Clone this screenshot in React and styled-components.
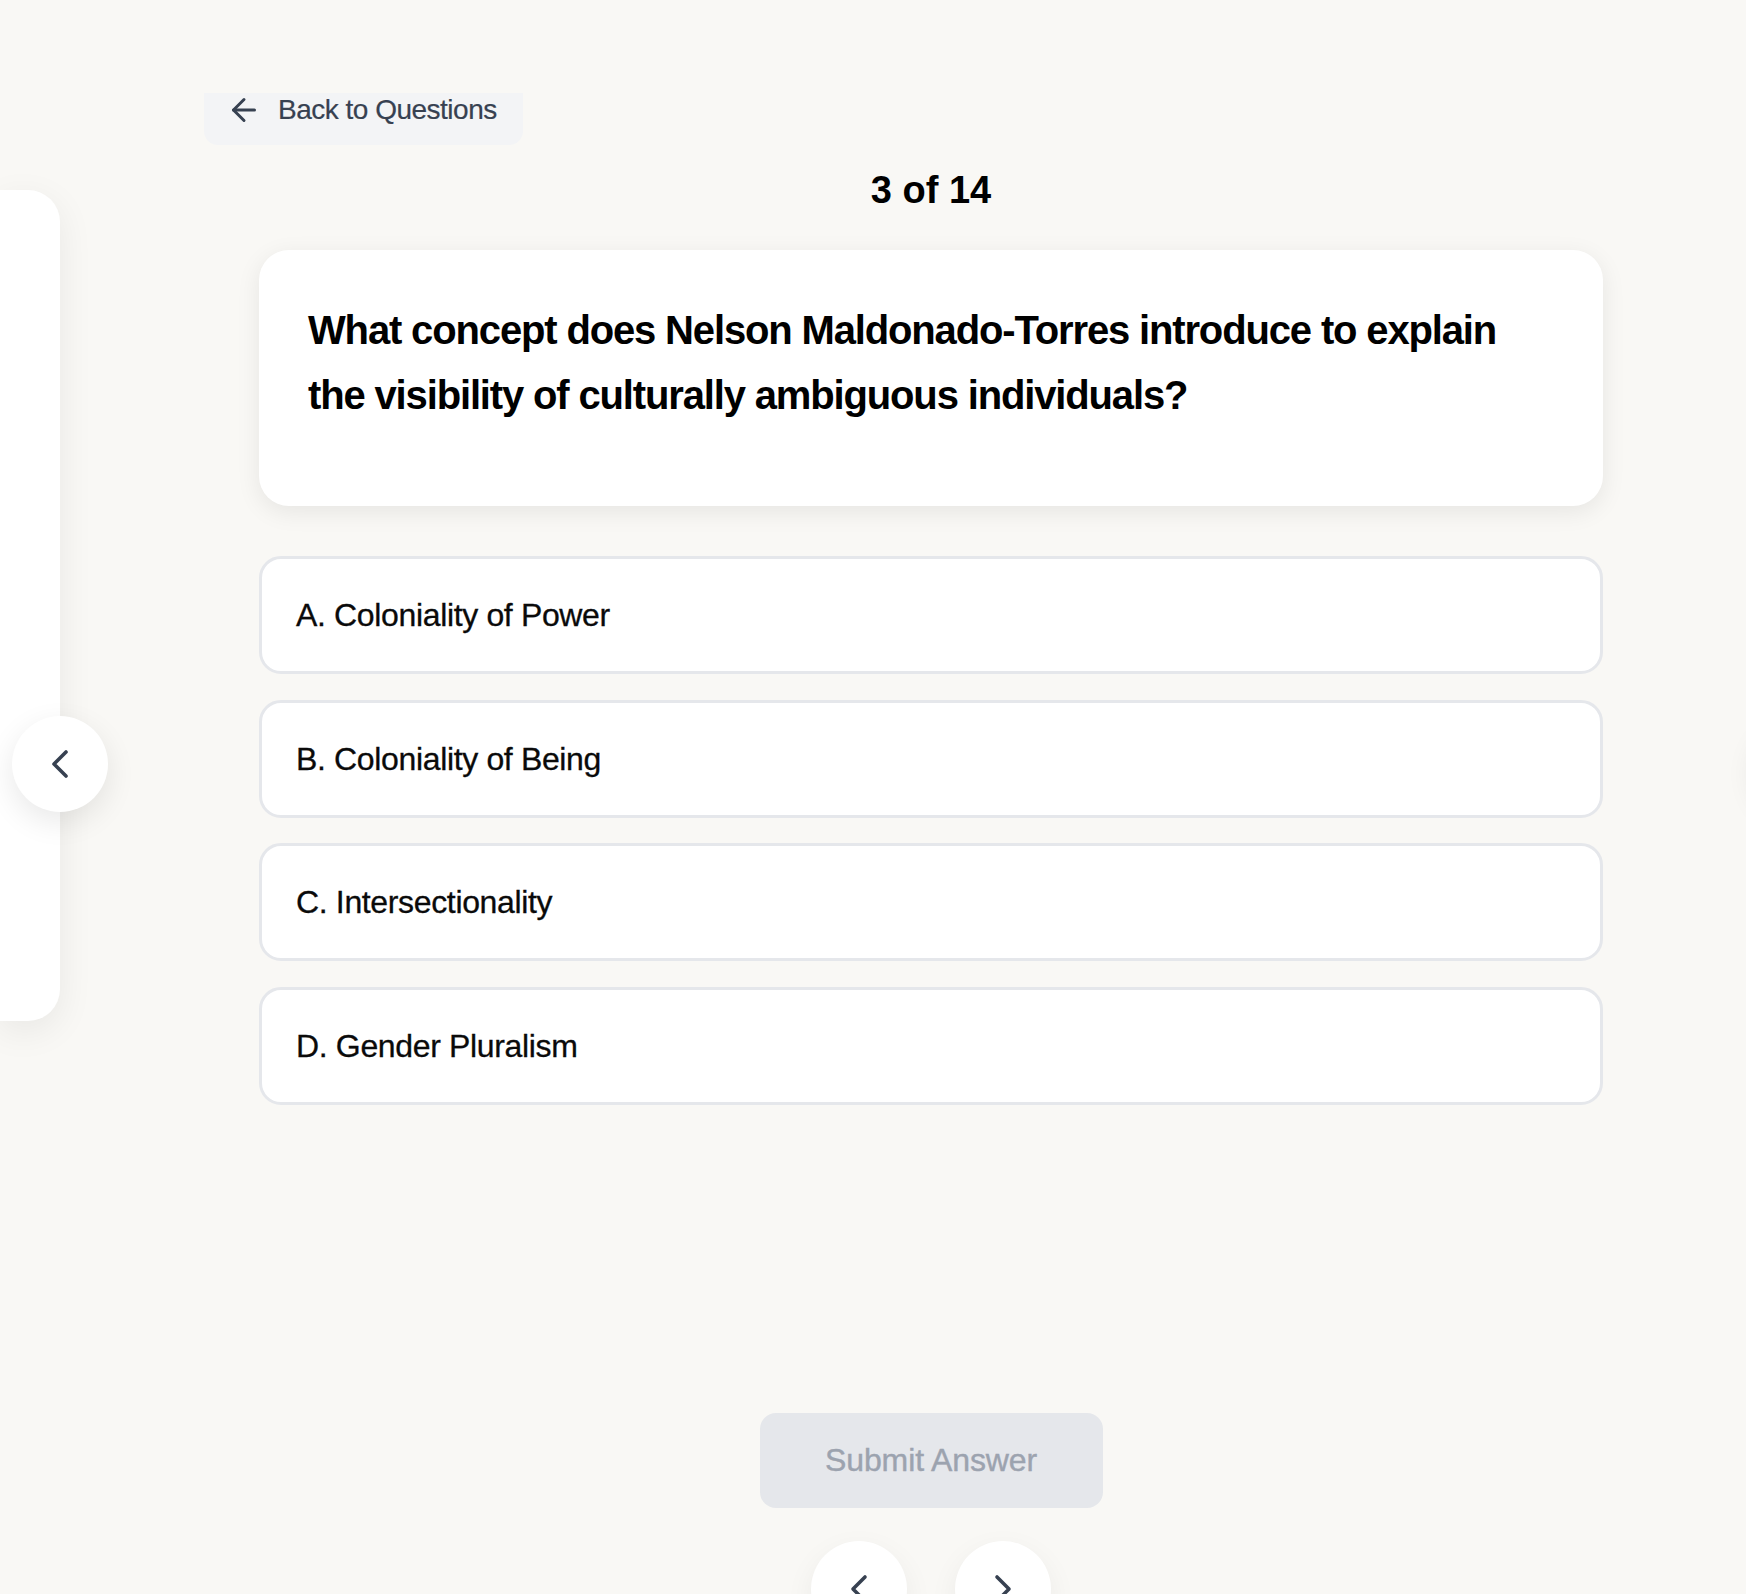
import styled, { createGlobalStyle } from 'styled-components';
import { ArrowLeft, ChevronLeft, ChevronRight } from 'lucide-react';

const GlobalStyle = createGlobalStyle`
  html, body {
    margin: 0;
    padding: 0;
    background: #f9f8f5;
    font-family: "Liberation Sans", Arial, sans-serif;
  }
  * { box-sizing: border-box; }
`;

const Page = styled.div`
  width: 100%;
  min-height: 1594px;
  overflow: hidden;
  background: #f9f8f5;
`;

// 위쪽이 잘려 보이는 뒤로가기 버튼
const BackWrap = styled.div`
  margin-top: 93px;
  height: 52px;
  padding-left: 204px;
  overflow: hidden;
`;

const BackButton = styled.button`
  margin-top: -18px;
  height: 70px;
  display: flex;
  align-items: center;
  gap: 16px;
  padding: 0 26px 0 22px;
  border: none;
  border-radius: 14px;
  background: #f3f4f6;
  color: #374151;
  font-family: "Liberation Sans", Arial, sans-serif;
  font-size: 28px;
  letter-spacing: -0.5px;
  -webkit-text-stroke: 0.2px currentColor;
  cursor: pointer;
`;

const Row = styled.div`
  display: flex;
  align-items: flex-start;
`;

const PeekSlot = styled.div`
  position: relative;
  flex-shrink: 0;
  width: 60px;
  margin-top: 45px;
  margin-left: ${(p) => (p.$right ? '199px' : '0')};
`;

const PeekCard = styled.div`
  height: 831px;
  background: #fff;
  border-radius: ${(p) => (p.$right ? '32px 0 0 32px' : '0 32px 32px 0')};
  box-shadow: 0 10px 36px rgba(0, 0, 0, 0.07);
`;

const SideArrow = styled.button`
  position: absolute;
  top: 526px;
  ${(p) => (p.$right ? 'left: -48px;' : 'right: -48px;')}
  width: 96px;
  height: 96px;
  border: none;
  border-radius: 50%;
  background: #fff;
  color: #374151;
  display: flex;
  align-items: center;
  justify-content: center;
  box-shadow: 0 10px 30px rgba(0, 0, 0, 0.09);
  cursor: pointer;
`;

const Main = styled.main`
  flex-shrink: 0;
  width: 1344px;
  margin-left: 199px;
  display: flex;
  flex-direction: column;
`;

const Counter = styled.div`
  margin-top: 22px;
  text-align: center;
  font-size: 38px;
  line-height: 46px;
  font-weight: 700;
  color: #000;
`;

const QuestionCard = styled.div`
  margin-top: 37px;
  background: #fff;
  border-radius: 30px;
  padding: 48px 48px 48px 49px;
  box-shadow: 0 6px 24px rgba(0, 0, 0, 0.08);
`;

const QuestionText = styled.h2`
  margin: 0 0 30px;
  font-size: 40px;
  line-height: 65px;
  font-weight: 700;
  letter-spacing: -1.15px;
  color: #000;
`;

const Options = styled.div`
  margin-top: 50px;
  display: flex;
  flex-direction: column;
  gap: 25.6px;
`;

const Option = styled.button`
  width: 100%;
  text-align: left;
  padding: 32px 32px 32px 34px;
  background: #fff;
  border: 3px solid #e5e7eb;
  border-radius: 22px;
  font-family: "Liberation Sans", Arial, sans-serif;
  font-size: 32px;
  line-height: 48px;
  letter-spacing: -0.35px;
  -webkit-text-stroke: 0.3px currentColor;
  color: #0a0a0a;
  cursor: pointer;
`;

const SubmitButton = styled.button`
  align-self: center;
  margin-top: 308px;
  width: 343px;
  height: 95px;
  border: none;
  border-radius: 16px;
  background: #e5e7eb;
  color: #9ca3af;
  font-family: "Liberation Sans", Arial, sans-serif;
  font-size: 32px;
  letter-spacing: -0.1px;
  -webkit-text-stroke: 0.4px currentColor;
  cursor: not-allowed;
`;

const NavRow = styled.div`
  align-self: center;
  margin-top: 33px;
  display: flex;
  gap: 48px;
`;

const NavCircle = styled.button`
  width: 96px;
  height: 96px;
  border: none;
  border-radius: 50%;
  background: #fff;
  color: #374151;
  display: flex;
  align-items: center;
  justify-content: center;
  box-shadow: 0 10px 30px rgba(0, 0, 0, 0.06);
  cursor: pointer;
`;

const options = [
  'A. Coloniality of Power',
  'B. Coloniality of Being',
  'C. Intersectionality',
  'D. Gender Pluralism',
];

function App() {
  return (
    <>
      <GlobalStyle />
      <Page>
        <BackWrap>
          <BackButton>
            <ArrowLeft size={36} strokeWidth={2} />
            Back to Questions
          </BackButton>
        </BackWrap>

        <Row>
          <PeekSlot>
            <PeekCard />
            <SideArrow>
              <ChevronLeft size={48} strokeWidth={1.8} />
            </SideArrow>
          </PeekSlot>

          <Main>
            <Counter>3 of 14</Counter>
            <QuestionCard>
              <QuestionText>
                What concept does Nelson Maldonado-Torres introduce to explain the visibility of culturally ambiguous individuals?
              </QuestionText>
            </QuestionCard>

            <Options>
              {options.map((item) => (
                <Option key={item}>{item}</Option>
              ))}
            </Options>

            <SubmitButton disabled>Submit Answer</SubmitButton>

            <NavRow>
              <NavCircle>
                <ChevronLeft size={48} strokeWidth={1.8} />
              </NavCircle>
              <NavCircle>
                <ChevronRight size={48} strokeWidth={1.8} />
              </NavCircle>
            </NavRow>
          </Main>

          <PeekSlot $right>
            <PeekCard $right />
            <SideArrow $right>
              <ChevronRight size={48} strokeWidth={1.8} />
            </SideArrow>
          </PeekSlot>
        </Row>
      </Page>
    </>
  );
}

export default App;
